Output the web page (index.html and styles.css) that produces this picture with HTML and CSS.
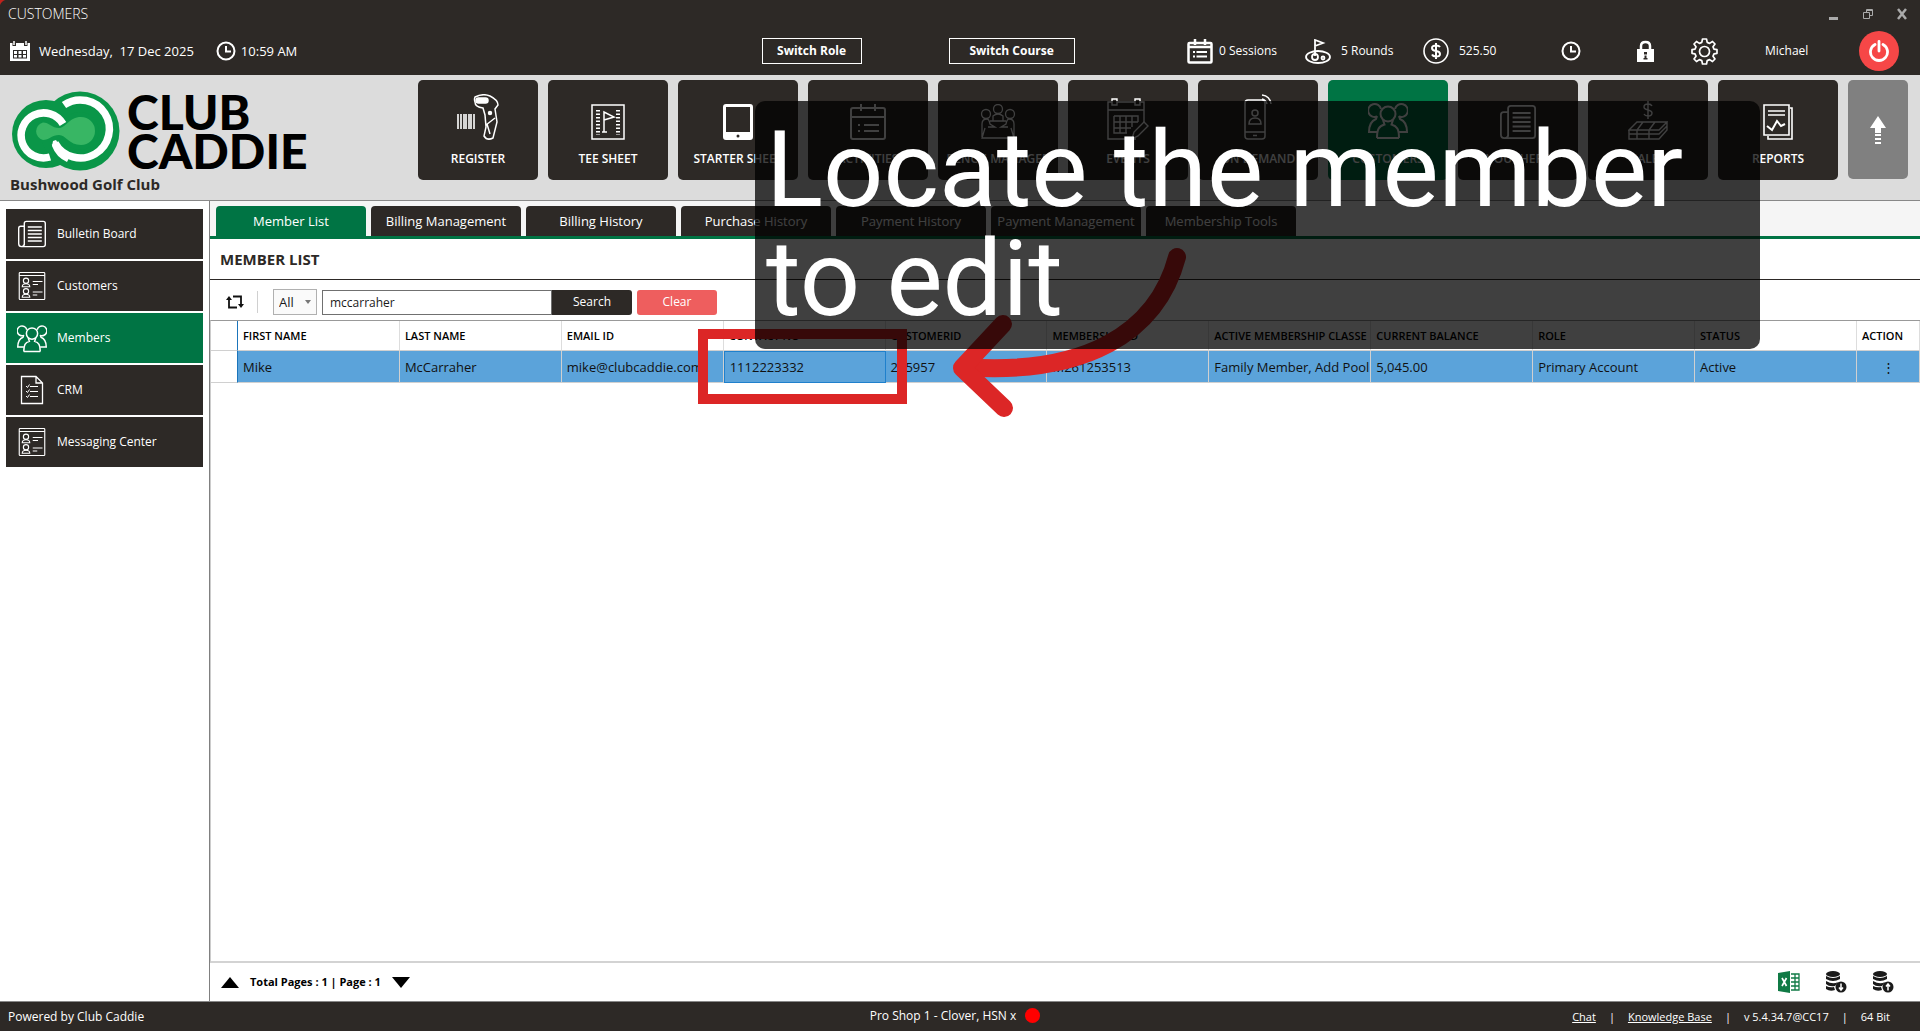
FILE: index.html
```html
<!DOCTYPE html>
<html lang="en">
<head>
<meta charset="utf-8">
<title>Customers - Member List</title>
<link rel="stylesheet" href="styles.css">
</head>
<body>
<svg width="0" height="0" class="defs" aria-hidden="true">
  <symbol id="people" viewBox="0 0 40 40"><g fill="none" stroke="currentColor" stroke-width="2"><circle cx="20" cy="14" r="7.500"/><path d="M13 9A6.500 6.500 0 1 0 9 16.500M27 9A6.500 6.500 0 1 1 31 16.500"/><path d="M9 38C9 29 11 26 16.500 24.500L15 20M31 38C31 29 29 26 23.500 24.500L25 20M9 38H31"/><path d="M9 16L8 19C3 21 1 25 1 32H9M31 16L32 19C37 21 39 25 39 32H31"/></g></symbol>
  <symbol id="news" viewBox="0 0 40 40"><g fill="none" stroke="currentColor" stroke-width="2"><path d="M9 36V5Q9 2 12 2H36Q39 2 39 5V35Q39 38 36 38H5Q1 38 1 34V12Q1 9 4 9H9M9 34Q9 38 5 38"/><path d="M14 10H34M14 15H34M14 20H34M14 25H34M14 30H34"/></g></symbol>
  <symbol id="cards" viewBox="0 0 40 40"><g fill="none" stroke="currentColor" stroke-width="1.500"><rect x="3" y="2" width="34" height="36" rx="1"/><path d="M3 6H37M21 14H34M21 18H28M21 28H34M21 32H27"/><circle cx="12" cy="13" r="3.500"/><path d="M7 21Q7 17 12 17Q17 17 17 21Z"/><circle cx="12" cy="27" r="3.500"/><path d="M7 35Q7 31 12 31Q17 31 17 35Z"/></g></symbol>
  <symbol id="clock" viewBox="0 0 20 20"><g fill="none" stroke="currentColor" stroke-width="2"><circle cx="10" cy="10" r="8.500"/><path d="M10 5V10.500H15"/></g></symbol>
  <symbol id="sheet" viewBox="0 0 36 36"><g fill="none" stroke="currentColor" stroke-width="2"><rect x="1" y="4" width="34" height="31" rx="2"/><path d="M1 13H35M11 0V7M25 0V7M8 21H10M14 21H29M8 27H10M14 27H29"/></g></symbol>
  <symbol id="db" viewBox="0 0 22 22"><g fill="currentColor"><ellipse cx="8" cy="3" rx="7" ry="3"/><path d="M1 5Q8 9 15 5V8Q8 12 1 8ZM1 10Q8 14 13 11L10 15Q4 16 1 13ZM1 15Q5 17 9 16L10 19Q5 21 1 18Z"/><circle cx="16" cy="16" r="5.500"/></g></symbol>
</svg>

<header class="top">
  <div class="titlebar">
    <h1 class="title">CUSTOMERS</h1>
    <div class="winctl">
      <button type="button" aria-label="Minimize"><svg width="10" height="12" viewBox="0 0 10 12"><path d="M0 9H9V12H0Z" fill="#aaa"/></svg></button>
      <button type="button" aria-label="Restore"><svg width="10" height="12" viewBox="0 0 10 12" fill="none" stroke="#aaa"><path d="M3.500 4V1.500H9.500V7.500H7M.5 4.500H6.500V10.500H.5ZM3.500 2.500H9.500"/></svg></button>
      <button type="button" aria-label="Close"><svg width="10" height="12" viewBox="0 0 10 12"><path d="M1 1L9 11M9 1L1 11" stroke="#aaa" stroke-width="2.500"/></svg></button>
    </div>
  </div>
  <div class="statusbar">
    <div class="datetime">
      <svg width="20" height="20" viewBox="0 0 20 20"><path d="M0 2H2.500V5H6V2H14V5H17.500V2H20V20H0Z" fill="#fff"/><path d="M4 0V4M16 0V4" stroke="#fff" stroke-width="1.500"/><path d="M3 9H17V17.500H3Z" fill="#2d2926"/><path d="M4 10H7V13H4ZM8.500 10H11.500V13H8.500ZM13 10H16V13H13ZM4 14H7V16.500H4ZM8.500 14H11.500V16.500H8.500ZM13 14H16V16.500H13Z" fill="#fff"/></svg>
      <span class="date">Wednesday,&nbsp; 17 Dec 2025</span>
      <svg width="20" height="20"><use href="#clock"/></svg>
      <span class="time">10:59 AM</span>
    </div>
    <div class="switches">
      <button type="button" class="switch role">Switch Role</button>
      <button type="button" class="switch course">Switch Course</button>
    </div>
    <div class="stats">
      <div class="stat"><svg width="26" height="25" viewBox="0 0 26 25" fill="none" stroke="#fff" stroke-width="2.500"><rect x="1.500" y="4" width="23" height="19.500" rx="1"/><path d="M2 8H25M8 0V6M18 0V6" /><path d="M6 13H8M9.500 13H20M6 17.500H8M9.500 17.500H20" stroke-width="2"/></svg><span>0 Sessions</span></div>
      <div class="stat rounds"><svg width="26" height="25" viewBox="0 0 26 25" fill="none" stroke="#fff" stroke-width="1.800"><ellipse cx="13" cy="18" rx="12" ry="6"/><path d="M10 17V1L18 4L10 7"/><circle cx="10" cy="18" r="3"/><circle cx="18" cy="19" r="1.500"/></svg><span>5 Rounds</span></div>
      <div class="stat rounds"><svg width="26" height="26" viewBox="0 0 26 26" fill="none" stroke="#fff" stroke-width="1.600"><circle cx="13" cy="13" r="12"/><path d="M17 9Q16 7.500 13 7.500Q9 7.500 9 10Q9 12.500 13 13Q17 13.500 17 16Q17 18.500 13 18.500Q10 18.500 9 16.500M13 5V21" stroke-width="2"/></svg><span>525.50</span></div>
      <button type="button" class="ic" aria-label="Time clock"><svg width="20" height="20"><use href="#clock"/></svg></button>
      <button type="button" class="ic" aria-label="Lock"><svg width="17" height="22" viewBox="0 0 17 22"><path d="M4 11V6Q4 2 8.500 2Q13 2 13 6V11" fill="none" stroke="#fff" stroke-width="2.500"/><path d="M0 9H17V22H0Z" fill="#fff"/><path d="M7 12H10V14.500H7ZM7.500 15.500H9.500V18H10.500V19.500H6.500V18H7.500Z" fill="#2d2926"/></svg></button>
      <button type="button" class="ic" aria-label="Settings"><svg width="27" height="27" viewBox="0 0 27 27" fill="none" stroke="#fff" stroke-width="1.700"><path d="M11.500 1H15.500L16.200 4.400L18.600 5.400L21.500 3.500L24 6L22 8.800L23 11.100L26 11.700V15.300L23 15.900L22 18.200L24 21L21.500 23.500L18.600 21.600L16.200 22.600L15.500 26H11.500L10.800 22.600L8.400 21.600L5.500 23.500L3 21L5 18.200L4 15.900L1 15.300V11.700L4 11.100L5 8.800L3 6L5.500 3.500L8.400 5.400L10.800 4.400Z" stroke-linejoin="round"/><circle cx="13.500" cy="13.500" r="5"/></svg></button>
      <span class="user">Michael</span>
      <button type="button" class="power" aria-label="Sign out"><svg width="20" height="22" viewBox="0 0 20 22" fill="none" stroke="#fff" stroke-width="2.800" stroke-linecap="round"><path d="M6 4.500A8.500 8.500 0 1 0 14 4.500M10 1.500V11"/></svg></button>
    </div>
  </div>
</header>

<section class="brandbar">
  <div class="brand">
    <div class="logo">
      <svg width="108" height="80" viewBox="0 0 108 80">
        <g fill="#0a9648"><circle cx="34" cy="43" r="34"/><circle cx="68" cy="40" r="39.500"/></g>
        <circle cx="68" cy="40" r="19" fill="#0a9648"/>
        <g fill="none" stroke="#fff" stroke-width="7.500"><path d="M52 14A29 29 0 1 1 43 52"/><path d="M51 33A22.500 22.500 0 1 0 38 66" /></g>
        <path d="M31 31.500C37 31.500 40 37 47 37C54 37 57 26 69 26A14 14 0 0 1 69 54C57 54 54 44 47 44C40 44 37 49 31 49A9 9 0 0 1 31 31.500Z" fill="#38b664"/>
        <path d="M42 49L54 66L46 68L41 58Z" fill="#0a9648"/><path d="M41 50L44 49Q50 60 58 65L55 71Q44 66 40 55Z" fill="#fff"/>
      </svg>
      <div class="wordmark"><span>CLUB</span><span>CADDIE</span></div>
    </div>
    <p class="club">Bushwood Golf Club</p>
  </div>
  <nav class="modules" aria-label="Modules">
    <button type="button" class="mod"><svg width="42" height="46" viewBox="0 0 42 46" fill="none" stroke="#fff" stroke-width="1.500"><path d="M1 20V35M4 20V35M7 20V35M9 20V35M12 20V35M14 20V35M17 20V35" stroke-width="1.600"/><path d="M18 3Q26-1 33 2Q41 6 41 11L38 15L40 28L36 44Q30 47 27 42L29 33L28 21L26 14Q18 13 18 8Q17 5 18 3ZM29 31L38 24M30 30L33 40"/><rect x="19" y="4" width="12" height="5" rx="2.500" fill="#fff"/><circle cx="33" cy="19" r="1.500" fill="#fff"/></svg><span>REGISTER</span></button>
    <button type="button" class="mod"><svg width="34" height="36" viewBox="0 0 34 36" fill="none" stroke="#fff" stroke-width="1.500"><rect x="1" y="1" width="32" height="34"/><path d="M7 6V31M27 6V31" stroke-width="4" stroke-dasharray="1.500 2"/><path d="M13 28V8L23 13L13 16M11 28H16"/></svg><span>TEE SHEET</span></button>
    <button type="button" class="mod"><svg width="30" height="36" viewBox="0 0 30 36"><path fill-rule="evenodd" d="M3 0H27Q30 0 30 3V33Q30 36 27 36H3Q0 36 0 33V3Q0 0 3 0ZM3 3V28H27V3ZM15 30.500A1.500 1.500 0 1 0 15 33.500A1.500 1.500 0 1 0 15 30.500Z" fill="#fff"/></svg><span>STARTER SHEET</span></button>
    <button type="button" class="mod"><svg width="36" height="36"><use href="#sheet"/></svg><span>ACTIVITIES</span></button>
    <button type="button" class="mod"><svg width="36" height="36" viewBox="0 0 36 36" fill="none" stroke="#fff" stroke-width="1.300"><circle cx="18" cy="5" r="4.500"/><circle cx="6" cy="10" r="4.500"/><circle cx="30" cy="10" r="4.500"/><path d="M13 17V12Q18 8 23 12V17M2 33V20Q2 15 7 15Q9 15 10 20L15 23H8M34 33V20Q34 15 29 15Q27 15 26 20L21 23H28M10 17H26M5 24L2 34H34L31 24"/></svg><span>BENCH MANAGER</span></button>
    <button type="button" class="mod"><svg width="42" height="42" viewBox="0 0 42 42" fill="none" stroke="#fff" stroke-width="1.400"><path d="M29 41H1V4H5M10 4H28M33 4H37V24M1 12H37M5 1H10V7H5ZM28 1H33V7H28ZM7 18H31V24M7 18V35H20M7 24H31M7 30H24M13 18V35M19 18V35M25 18V29"/><path d="M25 41L27 34L37 24L41 28L31 38Z"/></svg><span>EVENTS</span></button>
    <button type="button" class="mod"><svg width="28" height="46" viewBox="0 0 28 46" fill="none" stroke="#fff" stroke-width="1.500"><rect x="1" y="6" width="20" height="39" rx="3"/><path d="M1 38H21M9 41.500H13"/><circle cx="11" cy="19" r="3"/><path d="M5 30Q5 24 11 24Q17 24 17 30ZM18 1Q26 2 27 10M18 5Q22 6 23 10"/></svg><span>ON DEMAND</span></button>
    <button type="button" class="mod on"><svg width="40" height="40"><use href="#people"/></svg><span>CUSTOMERS</span></button>
    <button type="button" class="mod"><svg width="36" height="36"><use href="#news"/></svg><span>VOUCHERS</span></button>
    <button type="button" class="mod"><svg width="40" height="40" viewBox="0 0 40 40" fill="none" stroke="#fff" stroke-width="1.400"><path d="M24 6Q23 4 20 4Q16 4 16 7Q16 9 20 10Q24 11 24 13Q24 16 20 16Q17 16 16 14M20 1V19M9 22H39L31 30H1ZM1 30V39H31L39 30V22M1 34H31L39 26M15 22L9 30V39M27 22L21 30V39"/></svg><span>SALES</span></button>
    <button type="button" class="mod"><svg width="30" height="36" viewBox="0 0 30 36" fill="none" stroke="#fff" stroke-width="1.600"><path d="M1 1H26V31H1ZM27 4H29V35H5V32M5 7H22M5 11H22"/><path d="M4 22L9 26L14 17L18 22L22 20" stroke-width="2"/></svg><span>REPORTS</span></button>
    <button type="button" class="mod up" aria-label="Collapse"><svg width="16" height="30" viewBox="0 0 16 30" fill="#fff"><path d="M8 1L16 13H11V18H5V13H0ZM5 19H11V21H5ZM5 23H11V25H5ZM5 27H11V29H5Z"/></svg></button>
  </nav>
</section>

<main class="main">
  <nav class="side" aria-label="Sections">
    <a href="#bulletin"><svg width="30" height="28"><use href="#news"/></svg>Bulletin Board</a>
    <a href="#customers"><svg width="30" height="30"><use href="#cards"/></svg>Customers</a>
    <a href="#members" class="on"><svg width="30" height="30"><use href="#people"/></svg>Members</a>
    <a href="#crm"><svg width="30" height="30" viewBox="0 0 30 30" fill="none" stroke="#fff"><path d="M4.500 1.500H19L25.500 8V28.500H4.500ZM19 1.500V8H25.500" stroke-width="1.300"/><path d="M9 11L10.500 12.500L12.500 9.500M9 16L10.500 17.500L12.500 14.500M9 21L10.500 22.500L12.500 19.500M13 11.500H21M13 16.500H21M13 21.500H21"/></svg>CRM</a>
    <a href="#messaging"><svg width="30" height="30"><use href="#cards"/></svg>Messaging Center</a>
  </nav>

  <section class="content">
    <div class="tabs">
      <button type="button" class="tab on">Member List</button>
      <button type="button" class="tab">Billing Management</button>
      <button type="button" class="tab">Billing History</button>
      <button type="button" class="tab">Purchase History</button>
      <button type="button" class="tab">Payment History</button>
      <button type="button" class="tab">Payment Management</button>
      <button type="button" class="tab">Membership Tools</button>
    </div>
    <h2 class="heading">MEMBER LIST</h2>
    <form class="toolbar">
      <button type="button" class="refresh" aria-label="Refresh"><svg width="18" height="14" viewBox="0 0 18 14" fill="none" stroke="#111" stroke-width="1.800"><path d="M3 3V12.500H11M7 1.500H15V11"/><path d="M0 5L3 1L6 5ZM12 9L15 13L18 9Z" fill="#111" stroke="none"/></svg></button>
      <span class="sep"></span>
      <label class="filter"><select aria-label="Filter"><option>All</option></select><svg width="6" height="4" viewBox="0 0 6 4"><path d="M0 0H6L3 4Z" fill="#777"/></svg></label>
      <input class="query" type="text" value="mccarraher" aria-label="Search members">
      <button type="button" class="btn search">Search</button>
      <button type="button" class="btn clear">Clear</button>
    </form>
    <div class="gridwrap">
      <table class="grid">
        <colgroup><col class="c-sel"><col><col><col><col><col><col><col><col><col><col><col class="c-act"></colgroup>
        <thead><tr><th></th><th>FIRST NAME</th><th>LAST NAME</th><th>EMAIL ID</th><th>CONTACT NO</th><th>CUSTOMERID</th><th>MEMBERSHIP ID</th><th>ACTIVE MEMBERSHIP CLASSE</th><th>CURRENT BALANCE</th><th>ROLE</th><th>STATUS</th><th>ACTION</th></tr></thead>
        <tbody><tr><td></td><td>Mike</td><td>McCarraher</td><td>mike@clubcaddie.com</td><td class="focus">1112223332</td><td>245957</td><td>M261253513</td><td>Family Member, Add Pool</td><td>5,045.00</td><td>Primary Account</td><td>Active</td><td class="act"><button type="button" aria-label="Row actions">⋮</button></td></tr></tbody>
      </table>
    </div>
    <div class="pager">
      <button type="button" aria-label="Previous page"><svg width="18" height="11" viewBox="0 0 18 11"><path d="M9 0L18 11H0Z"/></svg></button>
      <span class="pages">Total Pages : 1 | Page : 1</span>
      <button type="button" aria-label="Next page"><svg width="18" height="11" viewBox="0 0 18 11"><path d="M0 0H18L9 11Z"/></svg></button>
      <div class="exports">
        <button type="button" aria-label="Export to Excel"><svg width="22" height="22" viewBox="0 0 22 22"><path d="M0 2L12 0V22L0 20Z" fill="#107a45"/><path d="M13 3H21V19H13M13 7H21M13 11H21M13 15H21M17 3V19" fill="none" stroke="#107a45" stroke-width="1.300"/><path d="M4 7L8.500 15M8.500 7L4 15" stroke="#fff" stroke-width="1.700"/></svg></button>
        <button type="button" aria-label="Download data"><svg width="22" height="22"><use href="#db"/><path d="M16 12.500V18M14 16.500L16 19L18 16.500" fill="none" stroke="#fff" stroke-width="1.500"/></svg></button>
        <button type="button" aria-label="Upload data"><svg width="22" height="22"><use href="#db"/><path d="M16 19.500V14M14 15.500L16 13L18 15.500" fill="none" stroke="#fff" stroke-width="1.500"/></svg></button>
      </div>
    </div>
  </section>
</main>

<footer class="foot">
  <span>Powered by Club Caddie</span>
  <span class="shop">Pro Shop 1 - Clover, HSN x<i class="dot"></i></span>
  <span class="links"><a href="#chat">Chat</a><b>|</b><a href="#kb">Knowledge Base</a><b>|</b><span>v 5.4.34.7@CC17</span><b>|</b><span>64 Bit</span></span>
</footer>

<div class="marker"></div>
<svg class="arrow" width="240" height="180" viewBox="950 240 240 180" fill="none" stroke="#dc2626" stroke-width="18" stroke-linecap="round" stroke-linejoin="round"><path d="M1177 257C1157 333 1085 376 963 367"/><path d="M1003 324L962 368L1004 408"/></svg>
<div class="callout">Locate the member<br>to edit</div>
</body>
</html>
```
FILE: styles.css
```css
* { box-sizing: border-box; }
body {
  margin: 0;
  min-height: 100vh;
  display: flex;
  flex-direction: column;
  position: relative;
  background: #fff;
  color: #1a1a1a;
  font: 13px/18px "Open Sans", "Noto Sans", sans-serif;
}
button, input, select { font: inherit; color: inherit; margin: 0; }
button { padding: 0; border: 0; background: none; }
svg { display: block; flex: none; }
.defs { position: absolute; }

.top {
  background: radial-gradient(circle at 100% 100%, #2d2926 8px, #c0221c 9px) 0 0 / 8px 8px no-repeat, #2d2926;
  color: #fff;
}
.titlebar { display: flex; justify-content: space-between; align-items: center; height: 27px; padding: 0 13px 0 8px; }
.title { margin: 0; font-size: 14px; font-weight: 300; }
.winctl { display: flex; gap: 24px; }
.statusbar { display: grid; grid-template-columns: 40% 1fr auto; align-items: center; height: 48px; padding: 0 21px 0 10px; }
.datetime { display: flex; align-items: center; }
.date { margin: 0 22px 0 9px; }
.time { margin-left: 5px; }
.switches { display: flex; gap: 87px; margin-left: -4px; }
.switch { height: 26px; border: 1px solid #fff; font-weight: 700; font-size: 12px; }
.role { width: 100px; }
.course { width: 126px; }
.stats { display: grid; grid-template-columns: 118px 118px 138px 76px 54px 74px 94px 40px; align-items: center; font-size: 12px; }
.stat { display: flex; align-items: center; gap: 6px; }
.rounds { gap: 10px; }
.ic { justify-self: start; }
.power { display: flex; align-items: center; justify-content: center; width: 40px; height: 40px; border-radius: 50%; background: #f64747; }

.brandbar { display: flex; justify-content: space-between; min-height: 126px; padding: 5px 12px 0 10px; background: #dcdcdc; border-bottom: 1px solid #888; }
.brand { padding-top: 11px; }
.logo { display: flex; align-items: flex-start; gap: 7px; padding-left: 2px; }
.wordmark { display: flex; flex-direction: column; padding-top: 1px; font: 900 48px/39px Lato, sans-serif; color: #000; }
.club { margin: 3px 0 0; font-size: 15px; line-height: 20px; font-weight: 700; color: #2d2926; }
.modules { display: flex; gap: 10px; }
.mod { display: flex; flex-direction: column; align-items: center; justify-content: flex-end; gap: 10px; width: 120px; height: 100px; padding-bottom: 12px; border-radius: 5px; background: #2d2926; color: #fff; font-size: 12px; line-height: 18px; font-weight: 600; }
.mod.on { background: #007444; }
.mod.up { width: 60px; height: 99px; justify-content: center; padding: 0; background: #808080; }

.main { display: flex; flex: 1; }
.side { display: flex; flex-direction: column; gap: 2px; flex: none; width: 210px; padding: 8px 6px; border-right: 1px solid #808080; }
.side a { display: flex; align-items: center; gap: 10px; height: 50px; padding-left: 11px; background: #2d2926; color: #fff; text-decoration: none; font-size: 12px; font-weight: 500; }
.side a.on { background: #007444; }

.content { display: flex; flex-direction: column; flex: 1; min-width: 0; }
.tabs { display: flex; gap: 5px; padding: 5px 6px 0; background: #f5f5f5; border-bottom: 3px solid #007444; }
.tab { width: 150px; height: 30px; border-radius: 4px 4px 0 0; background: #2d2926; color: #fff; }
.tab.on { background: #007444; }
.heading { margin: 0; height: 41px; padding: 10px; border-bottom: 1px solid #2d2926; font-size: 15px; line-height: 20px; font-weight: 700; color: #2d2926; }
.toolbar { display: flex; align-items: center; height: 40px; padding: 4px 16px 0; font-size: 12px; }
.sep { width: 1px; height: 22px; margin: 0 15px 0 13px; background: #d0d0d0; }
.filter { display: flex; align-items: center; width: 44px; height: 26px; margin-right: 5px; padding: 0 5px; border: 1px solid #b0b0b0; background: #fafafa; }
.filter select { flex: 1; min-width: 0; border: 0; background: none; appearance: none; padding: 0; font-size: 13px; }
.query { width: 230px; height: 25px; padding: 0 7px; border: 1px solid #707070; }
.btn { width: 80px; height: 25px; color: #fff; }
.search { border-radius: 0 3px 3px 0; background: #2d2926; margin-right: 5px; }
.clear { border-radius: 3px; background: #ee5e5e; }

.gridwrap { flex: 1; border-top: 1px solid #999; border-left: 1px solid #ccc; border-bottom: 2px solid #d3d3d3; }
.grid { width: 100%; table-layout: fixed; border-collapse: separate; border-spacing: 0; }
.c-sel { width: 27px; }
.c-act { width: 63px; }
.grid th { height: 30px; padding: 0 0 0 5px; border-right: 1px solid #ddd; border-bottom: 1px solid #d0d0d0; text-align: left; font-size: 11px; font-weight: 600; white-space: nowrap; overflow: hidden; color: #000; }
.grid td { height: 32px; padding: 0 0 0 5px; border-right: 1px solid #d0d0d0; border-bottom: 1px solid #d0d0d0; background: #5ba3da; white-space: nowrap; overflow: hidden; color: #111; }
.grid th:first-child, .grid td:first-child { border-right: 1px solid #1b75bb; background: #fff; }
.grid td.focus { border: 1px solid #1f80cc; }
.grid .act { text-align: center; padding: 0; }

.pager { display: flex; align-items: center; height: 38px; padding: 0 26px 0 11px; font-size: 11px; }
.pages { margin: 0 11px; font-weight: 700; color: #000; }
.exports { display: flex; gap: 25px; margin-left: auto; }

.foot { display: grid; grid-template-columns: 1fr auto 1fr; align-items: center; height: 30px; padding: 0 30px 0 8px; border-top: 1px solid #888; background: #2d2926; color: #fff; font-size: 12px; }
.shop { display: flex; align-items: center; gap: 9px; padding: 0 0 2px 12px; }
.dot { width: 15px; height: 15px; border-radius: 50%; background: #f00; }
.links { display: flex; gap: 13px; justify-content: flex-end; font-size: 11px; }
.links a { color: #fff; }
.links b { font-weight: 400; }

.marker { position: absolute; left: 698px; top: 329px; width: 209px; height: 75px; border: 10px solid #dc2626; }
.arrow { position: absolute; left: 950px; top: 240px; }
.callout { position: absolute; left: 755px; top: 101px; width: 1005px; height: 248px; padding: 15px 11px; border-radius: 10px; background: rgba(0, 0, 0, .75); color: #fff; font: 106px/109px Roboto, sans-serif; white-space: nowrap; }
```
